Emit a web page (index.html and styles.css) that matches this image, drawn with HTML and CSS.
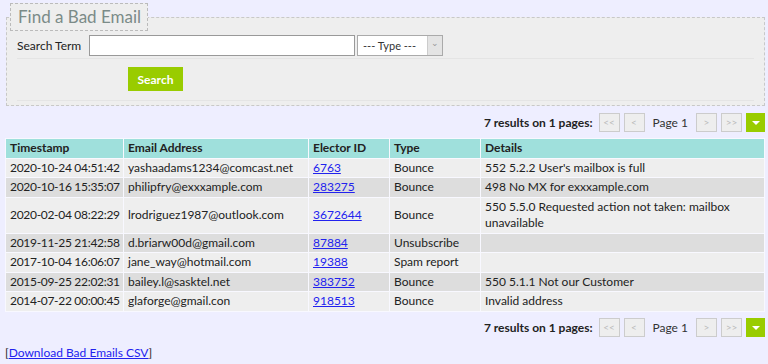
FILE: index.html
```html
<!DOCTYPE html>
<html lang="en">
<head>
  <meta charset="UTF-8">
  <title>Bad Emails</title>
  <link rel="stylesheet" href="styles.css">
</head>
<body>
  <fieldset class="search-box">
    <legend>Find a Bad Email</legend>
    <div class="form-row">
      <label for="term">Search Term</label>
      <input type="text" id="term">
      <span class="select-wrap">
        <select id="type"><option>--- Type ---</option></select>
      </span>
    </div>
    <div class="form-row buttons">
      <button type="submit">Search</button>
    </div>
  </fieldset>

  <div class="pager">
    <b>7 results on 1 pages:</b>
    <span class="pg">&lt;&lt;</span>
    <span class="pg">&lt;</span>
    <span class="page-no">Page 1</span>
    <span class="pg">&gt;</span>
    <span class="pg">&gt;&gt;</span>
    <span class="menu"></span>
  </div>

  <table class="results">
    <thead>
      <tr>
        <th class="c-ts">Timestamp</th>
        <th class="c-email">Email Address</th>
        <th class="c-id">Elector ID</th>
        <th class="c-type">Type</th>
        <th>Details</th>
      </tr>
    </thead>
    <tbody>
      <tr><td>2020-10-24 04:51:42</td><td>yashaadams1234@comcast.net</td><td><a href="#">6763</a></td><td>Bounce</td><td>552 5.2.2 User's mailbox is full</td></tr>
      <tr><td>2020-10-16 15:35:07</td><td>philipfry@exxxample.com</td><td><a href="#">283275</a></td><td>Bounce</td><td>498 No MX for exxxample.com</td></tr>
      <tr><td>2020-02-04 08:22:29</td><td>lrodriguez1987@outlook.com</td><td><a href="#">3672644</a></td><td>Bounce</td><td class="wrap">550 5.5.0 Requested action not taken: mailbox unavailable</td></tr>
      <tr><td>2019-11-25 21:42:58</td><td>d.briarw00d@gmail.com</td><td><a href="#">87884</a></td><td>Unsubscribe</td><td></td></tr>
      <tr><td>2017-10-04 16:06:07</td><td>jane_way@hotmail.com</td><td><a href="#">19388</a></td><td>Spam report</td><td></td></tr>
      <tr><td>2015-09-25 22:02:31</td><td>bailey.l@sasktel.net</td><td><a href="#">383752</a></td><td>Bounce</td><td>550 5.1.1 Not our Customer</td></tr>
      <tr><td>2014-07-22 00:00:45</td><td>glaforge@gmail.con</td><td><a href="#">918513</a></td><td>Bounce</td><td>Invalid address</td></tr>
    </tbody>
  </table>

  <div class="pager bottom">
    <b>7 results on 1 pages:</b>
    <span class="pg">&lt;&lt;</span>
    <span class="pg">&lt;</span>
    <span class="page-no">Page 1</span>
    <span class="pg">&gt;</span>
    <span class="pg">&gt;&gt;</span>
    <span class="menu"></span>
  </div>

  <p class="download">[<a href="#">Download Bad Emails CSV</a>]</p>
</body>
</html>
```

FILE: styles.css
```css
body {
  margin: 0;
  padding: 0 3px 0 5px;
  background: #eeeeff;
  font-family: Lato, "Open Sans", sans-serif;
  font-size: 12px;
  color: #222;
}

.search-box {
  margin: 3px 0 0 1px;
  padding: 4px 10px 4px 10px;
  border: 1px dashed #c8c8c8;
  background: #eeeeee;
}

.search-box legend {
  margin-left: -7px;
  padding: 0 6px 0 7px;
  border: 1px dashed #bbb;
  background: #eeeeee;
  color: #7b8b88;
  font-size: 17px;
  line-height: 26px;
}

.form-row {
  display: flex;
  align-items: center;
  border-bottom: 1px solid #e4e4e4;
}

.form-row:first-of-type {
  padding-bottom: 2px;
}

.form-row label {
  width: 72px;
}

.form-row input {
  width: 266px;
  height: 21px;
  box-sizing: border-box;
  margin: 0 2px 0 0;
  border: 1px solid #999;
  background: #fff;
}

.select-wrap {
  position: relative;
  width: 86px;
  height: 21px;
}

.select-wrap select {
  appearance: none;
  width: 86px;
  height: 21px;
  padding: 0 0 0 5px;
  border: 1px solid #aaa;
  background: #fff;
  font-family: Lato, sans-serif;
  font-size: 11px;
  color: #333;
}

.select-wrap::after {
  content: "\2304";
  position: absolute;
  right: 1px;
  top: 1px;
  width: 14px;
  height: 19px;
  background: #e4e4e4;
  border-left: 1px solid #ccc;
  color: #999;
  font-size: 9px;
  line-height: 14px;
  text-align: center;
  pointer-events: none;
}

.form-row.buttons {
  padding: 8px 0 9px 111px;
}

.form-row button {
  width: 55px;
  height: 24px;
  border: none;
  background: #99cc00;
  color: #fff;
  font-family: Lato, sans-serif;
  font-weight: bold;
  font-size: 12px;
}

.pager {
  display: flex;
  justify-content: flex-end;
  align-items: center;
  gap: 4px;
  margin: 7px 0 6px 0;
  height: 19px;
}

.pager b {
  margin-right: 2px;
}

.pg {
  width: 19px;
  height: 17px;
  border: 1px solid #ccc;
  background: #eeeeee;
  color: #bbb;
  font-size: 10px;
  text-align: center;
  line-height: 17px;
}

.page-no {
  margin: 0 4px;
  color: #333;
}

.menu {
  position: relative;
  width: 19px;
  height: 19px;
  background: #99cc00;
}

.menu::after {
  content: "";
  position: absolute;
  left: 6px;
  top: 8px;
  border-left: 4px solid transparent;
  border-right: 4px solid transparent;
  border-top: 4px solid #fff;
}

.results {
  width: 760px;
  border-collapse: collapse;
  table-layout: fixed;
}

.results th, .results td {
  border: 1px solid #f8f8ff;
  padding: 1px 4px;
  line-height: 16.5px;
  text-align: left;
  vertical-align: middle;
  white-space: nowrap;
}

.results td:first-child {
  letter-spacing: -0.3px;
}

.results td.wrap {
  white-space: normal;
}

.results th {
  background: #9fe0dc;
  font-weight: bold;
}

.results tbody tr:nth-child(odd) td {
  background: #eeeeee;
}

.results tbody tr:nth-child(even) td {
  background: #dddddd;
}

.c-ts { width: 109px; }
.c-email { width: 176px; }
.c-id { width: 72px; }
.c-type { width: 82px; }

.results a, .download a {
  color: #2222ee;
}

.pager.bottom {
  margin-top: 6px;
}

.download {
  margin: 8px 0 0 0;
}
```
